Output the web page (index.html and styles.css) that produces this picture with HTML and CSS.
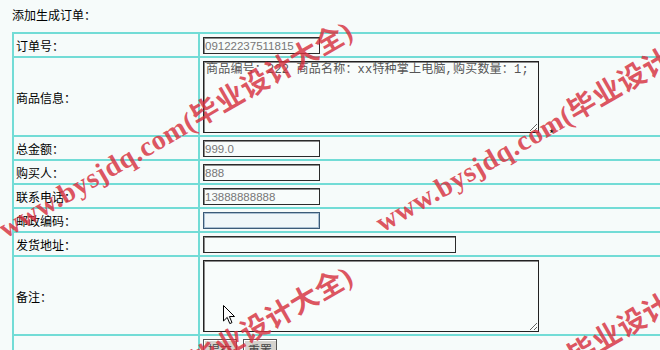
FILE: index.html
```html
<!DOCTYPE html>
<html>
<head>
    <title>添加生成订单</title>
    <link rel="stylesheet" href="styles.css">
</head>
<body>
    <div class="page">
        <p class="title">添加生成订单：</p>
        <table class="order">
            <tr>
                <td class="label">订单号：</td>
                <td><input class="short" type="text" value="09122237511815" readonly></td>
            </tr>
            <tr>
                <td class="label">商品信息：</td>
                <td><textarea readonly>商品编号：222 商品名称：xx特种掌上电脑,购买数量：1;</textarea><span class="req">*</span></td>
            </tr>
            <tr>
                <td class="label">总金额：</td>
                <td><input class="short" type="text" value="999.0" readonly></td>
            </tr>
            <tr>
                <td class="label">购买人：</td>
                <td><input class="short" type="text" value="888" readonly></td>
            </tr>
            <tr>
                <td class="label">联系电话：</td>
                <td><input class="short" type="text" value="13888888888" readonly></td>
            </tr>
            <tr>
                <td class="label">邮政编码：</td>
                <td><input class="short focused" type="text"></td>
            </tr>
            <tr>
                <td class="label">发货地址：</td>
                <td><input class="long" type="text"></td>
            </tr>
            <tr>
                <td class="label">备注：</td>
                <td><textarea></textarea></td>
            </tr>
            <tr>
                <td class="label"></td>
                <td><button type="submit">提交</button><button type="reset">重置</button></td>
            </tr>
        </table>

        <!-- watermark from the original screenshot -->
        <div class="mark mark-1">www.bysjdq.com(毕业设计大全)</div>
        <div class="mark mark-2">www.bysjdq.com(毕业设计大全)</div>
        <div class="mark mark-3">www.bysjdq.com(毕业设计大全)</div>
        <div class="mark mark-4">www.bysjdq.com(毕业设计大全)</div>

        <svg class="cursor" width="13" height="20" viewBox="0 0 13 20">
            <path d="M0.5 0.5 L0.5 16 L4.2 12.4 L6.8 18.6 L9 17.6 L6.4 11.5 L11.5 11.5 Z" fill="#fff" stroke="#000" stroke-width="1"/>
        </svg>
    </div>
</body>
</html>
```

FILE: styles.css
```css
body {
    margin: 0;
    background-color: #f6fbfa;
    font-family: "Noto Sans CJK SC", sans-serif;
    font-size: 12px;
    color: #000;
    overflow: hidden;
}
.page {
    position: relative;
    height: 350px;
    overflow: hidden;
    padding: 0 12px;
}
.title {
    margin: 0;
    padding-top: 7px;
    height: 25px;
    line-height: 15px;
}
.order {
    width: 720px;
    border: 1px solid #72dcd6;
    border-spacing: 0;
}
.order td {
    border: 1px solid #72dcd6;
    padding: 3px 3px 2px;
    line-height: 17px;
    vertical-align: middle;
}
.order td.label {
    width: 180px;
    padding-left: 2px;
    padding-right: 2px;
}
input {
    box-sizing: border-box;
    height: 17px;
    margin: 0;
    padding: 0 1px;
    vertical-align: top;
    border: 1px solid #2b2b2b;
    box-shadow: inset 1px 1px 0 #8a8a8a;
    background: #f8fcfb;
    color: #777;
    font-family: "Liberation Sans", sans-serif;
    font-size: 11.5px;
}
input.short {
    width: 117px;
}
input.long {
    width: 253px;
}
input.focused {
    border-color: #3b5a78;
    box-shadow: inset 0 0 0 1px #a9bfd2;
    background: #eff6f9;
}
textarea {
    box-sizing: border-box;
    width: 336px;
    height: 72px;
    margin: 0;
    padding: 1px 2px;
    vertical-align: bottom;
    border: 1px solid #222;
    box-shadow: inset 1px 1px 0 #8a8a8a;
    background: #f8fcfb;
    color: #555;
    font-family: "Liberation Mono", "Noto Sans CJK SC", monospace;
    font-size: 12px;
    line-height: 14px;
    letter-spacing: 0.2px;
}
.req {
    display: inline-block;
    vertical-align: bottom;
    margin-left: 10px;
    margin-bottom: -7px;
    line-height: 12px;
}
button {
    height: 20px;
    margin: 0 6px 0 0;
    padding: 0 4px;
    vertical-align: top;
    border: 1px solid #555;
    box-shadow: inset 1px 1px 0 #fff;
    background: #d6d3ce;
    color: #444;
    font-family: "Noto Sans CJK SC", sans-serif;
    font-size: 12px;
}
.mark {
    position: absolute;
    white-space: nowrap;
    font-family: "Liberation Serif", "Noto Sans CJK SC", serif;
    font-weight: bold;
    font-size: 28px;
    line-height: 28px;
    letter-spacing: 0.6px;
    color: rgba(214, 48, 62, 0.82);
    transform-origin: 0 100%;
    transform: rotate(-30deg);
}
.mark-1 {
    left: 8px;
    top: 215px;
}
.mark-2 {
    left: 385px;
    top: 209px;
}
.mark-3 {
    left: 8px;
    top: 460px;
}
.mark-4 {
    left: 385px;
    top: 454px;
}
.cursor {
    position: absolute;
    left: 223px;
    top: 305px;
}
```
